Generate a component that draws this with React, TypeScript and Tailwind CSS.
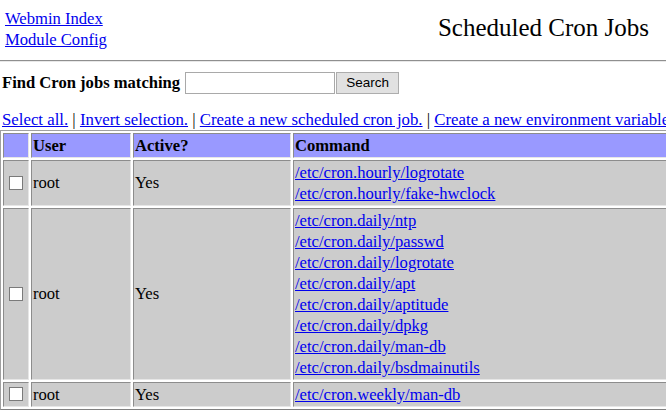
const serif = { fontFamily: '"Liberation Serif", "Times New Roman", serif' };

const jobs = [
  {
    user: "root",
    active: "Yes",
    commands: ["/etc/cron.hourly/logrotate", "/etc/cron.hourly/fake-hwclock"],
  },
  {
    user: "root",
    active: "Yes",
    commands: [
      "/etc/cron.daily/ntp",
      "/etc/cron.daily/passwd",
      "/etc/cron.daily/logrotate",
      "/etc/cron.daily/apt",
      "/etc/cron.daily/aptitude",
      "/etc/cron.daily/dpkg",
      "/etc/cron.daily/man-db",
      "/etc/cron.daily/bsdmainutils",
    ],
  },
  {
    user: "root",
    active: "Yes",
    commands: ["/etc/cron.weekly/man-db"],
  },
];

const actions = [
  "Select all.",
  "Invert selection.",
  "Create a new scheduled cron job.",
  "Create a new environment variable.",
];

const cell =
  "border border-t-[#8c8c8c] border-l-[#8c8c8c] border-b-[#e6e6e6] border-r-[#e6e6e6] p-[1px] align-middle text-left";

const App = () => {
  return (
    <div
      className="w-[666px] h-[412px] overflow-hidden bg-white text-black text-[16.6px]"
      style={serif}
    >
      {/* header */}
      <div className="flex items-center pt-[8px] pl-[5px] pr-[17px] leading-[21px]">
        <div className="flex flex-col">
          <a href="#" className="text-[#0000ee] underline">
            Webmin Index
          </a>
          <a href="#" className="text-[#0000ee] underline">
            Module Config
          </a>
        </div>
        <div className="ml-auto mb-[3px] text-[25px] leading-[28px]">Scheduled Cron Jobs</div>
      </div>
      <div className="mt-[10px] border-t border-[#8f8f8f] border-b border-b-[#e8e8e8]" />

      {/* search */}
      <form className="flex items-center mt-[9px] pl-[2px]">
        <span className="font-bold">Find Cron jobs matching</span>
        <input
          type="text"
          className="ml-[5px] w-[150px] h-[22px] border border-[#a9a9a9] bg-white"
        />
        <button
          type="button"
          className="ml-[1px] w-[63px] h-[22px] border border-[#adadad] bg-[#e1e1e1] text-[13.5px] text-black"
          style={{ fontFamily: '"Liberation Sans", Arial, sans-serif' }}
        >
          Search
        </button>
      </form>

      {/* action links */}
      <div className="mt-[15px] pl-[2px] whitespace-nowrap leading-[18px] text-[16.8px]">
        {actions.map((a, i) => (
          <span key={a}>
            {i > 0 && " | "}
            <a href="#" className="text-[#0000ee] underline">
              {a}
            </a>
          </span>
        ))}
      </div>

      {/* jobs table */}
      <table className="mt-[1px] w-[720px] border-separate border-spacing-[2px] border border-t-[#a0a0a0] border-l-[#a0a0a0] border-b-[#808080] border-r-[#808080] leading-[21px]">
        <thead>
          <tr className="bg-[#9999ff]">
            <th className={`${cell} w-[26px]`}></th>
            <th className={`${cell} w-[100px] font-bold`}>User</th>
            <th className={`${cell} w-[158px] font-bold`}>Active?</th>
            <th className={`${cell} font-bold`}>Command</th>
          </tr>
        </thead>
        <tbody>
          {jobs.map((job, idx) => (
            <tr key={idx} className="bg-[#cccccc]">
              <td className={cell}>
                <input
                  type="checkbox"
                  className="block ml-[4px] mr-[3px] w-[14px] h-[14px] appearance-none bg-white border border-[#7a7a7a]"
                />
              </td>
              <td className={cell}>{job.user}</td>
              <td className={cell}>{job.active}</td>
              <td className={cell}>
                {job.commands.map((c) => (
                  <div key={c}>
                    <a href="#" className="text-[#0000ee] underline">
                      {c}
                    </a>
                  </div>
                ))}
              </td>
            </tr>
          ))}
        </tbody>
      </table>
    </div>
  );
};

export default App;
